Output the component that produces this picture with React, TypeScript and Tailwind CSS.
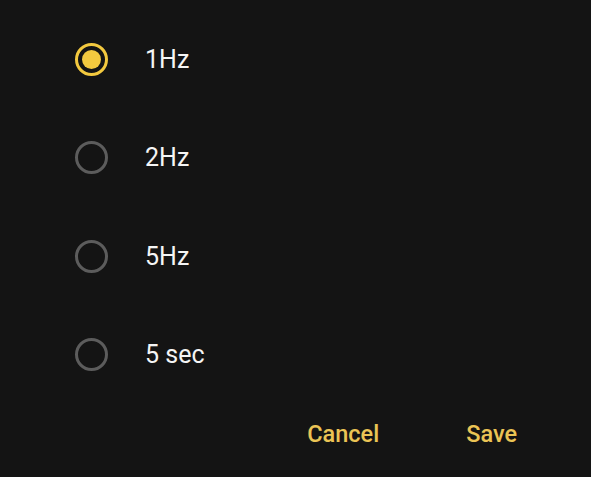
import React, { useState } from "react";

const options = ["1Hz", "2Hz", "5Hz", "5 sec"];

export default function App() {
  const [sel, setSel] = useState(0);
  return (
    <div
      className="w-[591px] h-[477px] bg-[#141414] flex flex-col"
      style={{ fontFamily: "Roboto, 'Noto Sans', sans-serif" }}
    >
      <div className="flex flex-col pt-[10px]">
        {options.map((o, i) => (
          <button
            key={o}
            onClick={() => setSel(i)}
            className="h-[98.5px] flex items-center pl-[75px] text-left"
          >
            {sel === i ? (
              <span className="w-[33px] h-[33px] rounded-full border-[3px] border-[#f3c93f] flex items-center justify-center">
                <span className="w-[19px] h-[19px] rounded-full bg-[#f3c93f]" />
              </span>
            ) : (
              <span className="w-[33px] h-[33px] rounded-full border-[3px] border-[#5c5c5c]" />
            )}
            <span className="ml-[37px] text-[25px] text-[#f5f5f5] leading-none">{o}</span>
          </button>
        ))}
      </div>
      <div className="flex justify-end items-center pr-[74px] mt-[19px] gap-[87px]">
        <button className="text-[23.5px] font-medium text-[#ebc455] leading-none">Cancel</button>
        <button className="text-[23.5px] font-medium text-[#ebc455] leading-none">Save</button>
      </div>
    </div>
  );
}
